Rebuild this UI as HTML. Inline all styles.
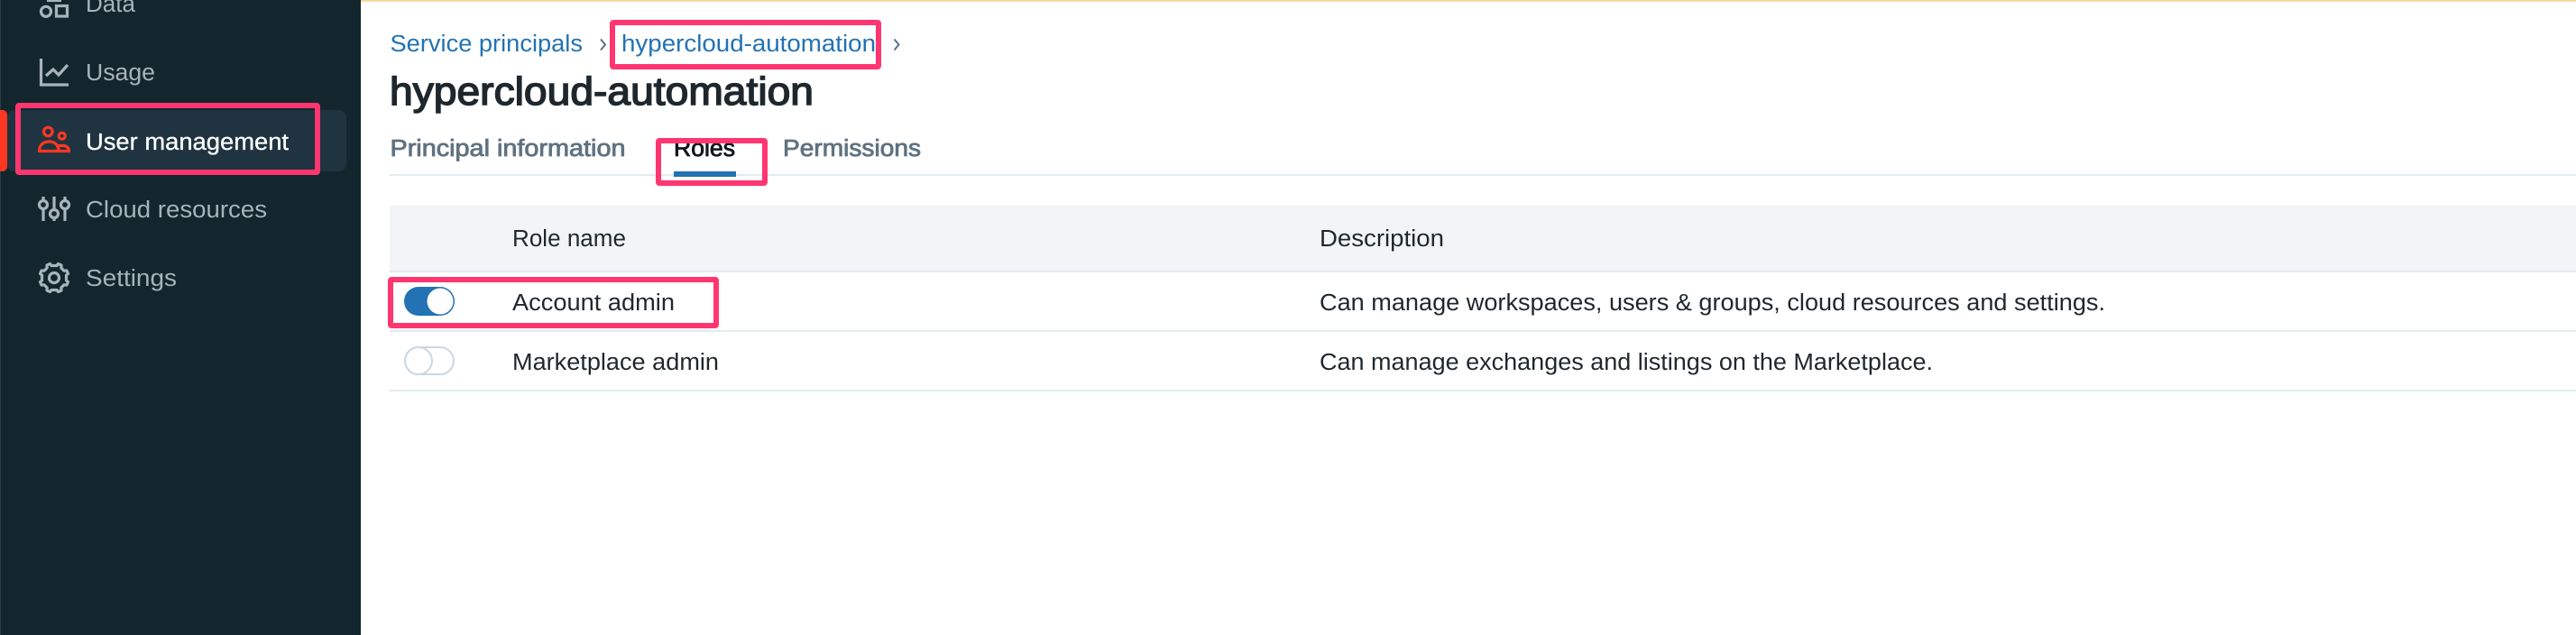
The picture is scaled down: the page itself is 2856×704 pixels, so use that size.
<!DOCTYPE html>
<html><head><meta charset="utf-8"><style>
html,body{margin:0;padding:0;background:#fff;width:2856px;height:704px;overflow:hidden}
svg{display:block}
text{font-family:"Liberation Sans",sans-serif;font-size:25.5px}
.n{fill:#a7b4b9}
.d{fill:#1f272d}
.b{fill:#2272b4}
.t{fill:#5f7281;stroke:#5f7281;stroke-width:.8px;font-size:25.5px}
</style></head><body>
<svg width="2856" height="704" viewBox="0 0 2856 704" xmlns="http://www.w3.org/2000/svg">
<rect width="2856" height="704" fill="#fff"/>
<rect x="400" y="0" width="2456" height="2" fill="#f5d8a4"/>
<rect x="0" y="0" width="400" height="704" fill="#13262d"/>
<rect x="0" y="0" width="1" height="704" fill="#2a3b42"/>
<rect x="8" y="122" width="376" height="68" rx="8" fill="#1f3440"/>
<rect x="-6" y="122" width="14" height="68" rx="5" fill="#ff3621"/>

<g fill="none" stroke="#a7b4b9" stroke-width="3.200">
<path d="M52 0.500H68"/>
<circle cx="51" cy="12.800" r="5.500"/>
<rect x="62.500" y="6.500" width="12" height="11.500"/>
<path d="M45.500 65V94H76"/>
<path d="M51 84L59 77L65 83L75 72"/>
<circle cx="48" cy="227" r="4.500"/><circle cx="60" cy="237" r="4.500"/><circle cx="72" cy="227" r="4.500"/>
<path d="M48 218V222M48 232V245M60 218V232M60 242V245M72 218V222M72 232V245"/>
<circle cx="60" cy="308" r="5.500"/>
<path d="M55.500 292.500L57 294.500H63L64.500 292.500L68 294L67.800 297L71 300.200L74 300L75.500 303.500L73.500 305V311L75.500 312.500L74 316L71 315.800L67.800 319L68 322L64.500 323.500L63 321.500H57L55.500 323.500L52 322L52.200 319L49 315.800L46 316L44.500 312.500L46.500 311V305L44.500 303.500L46 300L49 300.200L52.200 297L52 294Z" stroke-linejoin="round"/>
</g>
<g fill="none" stroke="#ff3621" stroke-width="3.200">
<circle cx="53.300" cy="146" r="4.800"/>
<circle cx="68.700" cy="150.700" r="3.500"/>
<path d="M43.500 167.500C43.500 160 49 157 54.500 157C60 157 65 160 65 167.500Z" stroke-linejoin="round"/>
<path d="M62 161.500H70C74 161.500 76.500 164 76.500 167.500H65"/>
</g>

<text class="n" x="95" y="13" textLength="55" lengthAdjust="spacingAndGlyphs">Data</text>
<text class="n" x="95" y="89" textLength="77" lengthAdjust="spacingAndGlyphs">Usage</text>
<text x="95" y="166" fill="#fff" stroke="#fff" stroke-width=".3" textLength="225" lengthAdjust="spacingAndGlyphs">User management</text>
<text class="n" x="95" y="241" textLength="201" lengthAdjust="spacingAndGlyphs">Cloud resources</text>
<text class="n" x="95" y="317" textLength="101" lengthAdjust="spacingAndGlyphs">Settings</text>

<text class="b" x="432.500" y="57" textLength="213.500" lengthAdjust="spacingAndGlyphs">Service principals</text>
<path d="M666 43.500L671 49.500L666 55.500" fill="none" stroke="#5f7281" stroke-width="2"/>
<text class="b" x="689" y="57" textLength="282" lengthAdjust="spacingAndGlyphs">hypercloud-automation</text>
<path d="M991.500 43.500L996.500 49.500L991.500 55.500" fill="none" stroke="#5f7281" stroke-width="2"/>
<text x="432" y="116" textLength="470" lengthAdjust="spacingAndGlyphs" fill="#1f272d" stroke="#1f272d" stroke-width="1.500" style="font-size:44px">hypercloud-automation</text>

<text class="t" x="432.500" y="173" textLength="261" lengthAdjust="spacingAndGlyphs">Principal information</text>
<text x="747" y="173" textLength="68" lengthAdjust="spacingAndGlyphs" fill="#11171c" stroke="#11171c" stroke-width=".8">Roles</text>
<text class="t" x="868" y="173" textLength="153" lengthAdjust="spacingAndGlyphs">Permissions</text>
<rect x="432" y="193" width="2424" height="2" fill="#e3ebf0"/>
<rect x="747" y="190" width="69" height="6" fill="#2272b4"/>

<rect x="432" y="228" width="2424" height="72" fill="#f3f4f6"/>
<rect x="432" y="300" width="2424" height="2" fill="#e3ebf0"/>
<rect x="432" y="366" width="2424" height="2" fill="#e3ebf0"/>
<rect x="432" y="432" width="2424" height="2" fill="#e3ebf0"/>

<text class="d" x="568" y="273" textLength="126" lengthAdjust="spacingAndGlyphs">Role name</text>
<text class="d" x="1463" y="273" textLength="138" lengthAdjust="spacingAndGlyphs">Description</text>
<text class="d" x="568" y="344" textLength="180" lengthAdjust="spacingAndGlyphs">Account admin</text>
<text class="d" x="1463" y="344" textLength="871" lengthAdjust="spacingAndGlyphs">Can manage workspaces, users &amp; groups, cloud resources and settings.</text>
<text class="d" x="568" y="410" textLength="229" lengthAdjust="spacingAndGlyphs">Marketplace admin</text>
<text class="d" x="1463" y="410" textLength="680" lengthAdjust="spacingAndGlyphs">Can manage exchanges and listings on the Marketplace.</text>

<rect x="448" y="318" width="56" height="32" rx="16" fill="#2272b4"/>
<circle cx="488" cy="334" r="14.500" fill="#fff"/>
<rect x="449" y="385" width="54" height="30" rx="15" fill="#fff" stroke="#cbd7e3" stroke-width="2"/>
<circle cx="464" cy="400" r="15" fill="#fff" stroke="#cbd7e3" stroke-width="2"/>

<g fill="none" stroke="#ff3670" stroke-width="6">
<rect x="20" y="117" width="332" height="74" rx="1"/>
<rect x="679" y="25" width="295" height="49" rx="1"/>
<rect x="730" y="156" width="118" height="47" rx="1"/>
<rect x="433" y="310" width="361" height="51" rx="1"/>
</g>
</svg>
</body></html>
